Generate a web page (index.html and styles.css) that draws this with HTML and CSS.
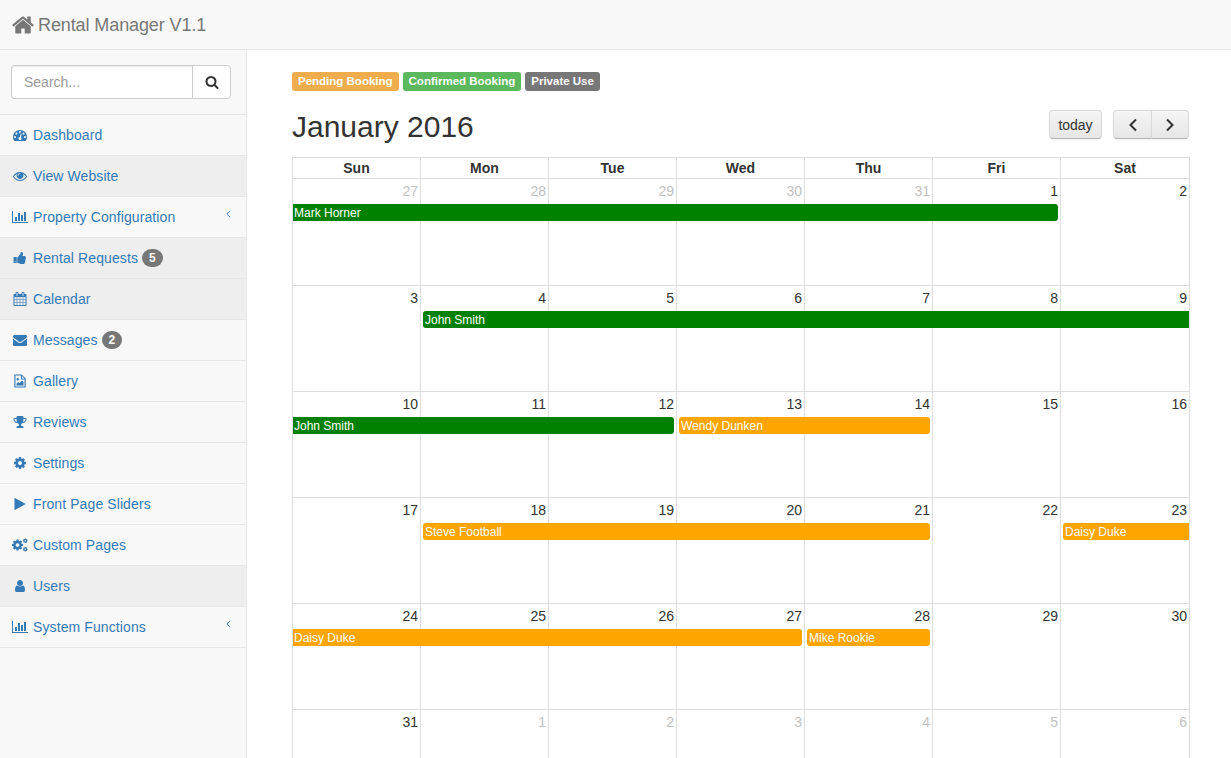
FILE: index.html
```html
<!DOCTYPE html>
<html lang="en">
<head>
    <meta charset="UTF-8">
    <meta name="viewport" content="width=device-width, initial-scale=1.0">
    <title>Rental Manager V1.1</title>
    <link rel="stylesheet" href="styles.css">
</head>
<body>
    <!-- icon sprite -->
    <svg class="sprite" xmlns="http://www.w3.org/2000/svg">
        <symbol id="i-home" viewBox="0 0 1792 1792"><path d="M1472 992v480q0 26-19 45t-45 19h-384v-384h-256v384h-384q-26 0-45-19t-19-45v-480q0-1 .5-3t.5-3l575-474 575 474q1 2 1 6zm223-69l-62 74q-8 9-21 11h-3q-13 0-21-7l-692-577-692 577q-12 8-24 7-13-2-21-11l-62-74q-8-10-7-23.5t11-21.5l719-599q32-26 76-26t76 26l244 204v-195q0-14 9-23t23-9h192q14 0 23 9t9 23v408l219 182q10 8 11 21.5t-7 23.5z"/></symbol>
        <symbol id="i-search" viewBox="0 0 1792 1792"><path d="M1216 832q0-185-131.500-316.500t-316.500-131.500-316.500 131.500-131.500 316.500 131.500 316.500 316.500 131.500 316.500-131.500 131.500-316.500zm512 832q0 52-38 90t-90 38q-54 0-90-38l-343-342q-179 124-399 124-143 0-273.500-55.500t-225-150-150-225-55.500-273.500 55.500-273.500 150-225 225-150 273.500-55.500 273.500 55.500 225 150 150 225 55.500 273.500q0 220-124 399l343 343q37 37 37 90z"/></symbol>
        <symbol id="i-dashboard" viewBox="0 0 1792 1792"><path d="M384 1152q0-53-37.500-90.500t-90.500-37.500-90.500 37.500-37.500 90.500 37.500 90.500 90.500 37.500 90.500-37.500 37.500-90.500zm192-448q0-53-37.500-90.500t-90.500-37.500-90.500 37.500-37.500 90.500 37.500 90.500 90.500 37.500 90.500-37.500 37.500-90.500zm428 481l101-382q6-26-7.500-48.500t-38.500-29.500-48 6.500-30 39.500l-101 382q-60 5-107 43.500t-63 98.500q-20 77 20 146t117 90 146-20 90-117q16-60-6-117t-72-91zm660-33q0-53-37.500-90.500t-90.500-37.500-90.500 37.500-37.500 90.500 37.500 90.500 90.500 37.500 90.500-37.500 37.500-90.500zm-640-640q0-53-37.500-90.500t-90.500-37.500-90.500 37.500-37.500 90.500 37.500 90.500 90.500 37.500 90.500-37.500 37.500-90.500zm448 192q0-53-37.500-90.500t-90.500-37.500-90.500 37.500-37.500 90.500 37.500 90.500 90.500 37.500 90.500-37.500 37.500-90.500zm320 448q0 261-141 483-19 29-54 29h-1402q-35 0-54-29-141-221-141-483 0-182 71-348t191-286 286-191 348-71 348 71 286 191 191 286 71 348z"/></symbol>
        <symbol id="i-eye" viewBox="0 0 1792 1792"><path d="M1664 960q-152-236-381-353 61 104 61 225 0 185-131.500 316.500t-316.500 131.500-316.500-131.500-131.500-316.500q0-121 61-225-229 117-381 353 133 205 333.500 326.500t434.500 121.500 434.500-121.500 333.500-326.500zm-720-384q0-20-14-34t-34-14q-125 0-214.500 89.500t-89.500 214.500q0 20 14 34t34 14 34-14 14-34q0-86 61-147t147-61q20 0 34-14t14-34zm848 384q0 34-20 69-140 230-376.500 368.500t-499.500 138.500-499.500-139-376.500-368q-20-35-20-69t20-69q140-229 376.500-368t499.500-139 499.500 139 376.500 368q20 35 20 69z"/></symbol>
        <symbol id="i-chart" viewBox="0 0 2048 1792"><path d="M640 896v512h-256v-512h256zm384-512v1024h-256v-1024h256zm1024 1152v128h-2048v-1536h128v1408h1920zm-640-896v768h-256v-768h256zm384-384v1152h-256v-1152h256z"/></symbol>
        <symbol id="i-thumb" viewBox="0 0 1792 1792"><path d="M320 1344q0-26-19-45t-45-19q-27 0-45.500 19t-18.500 45q0 27 18.500 45.500t45.500 18.500q26 0 45-18.500t19-45.500zm160-512v640q0 26-19 45t-45 19h-288q-26 0-45-19t-19-45v-640q0-26 19-45t45-19h288q26 0 45 19t19 45zm1184 0q0 86-55 149 15 44 15 76 3 76-43 137 17 56 0 117-15 57-54 94 9 112-49 181-64 76-197 78h-129q-66 0-144-15.500t-121.500-29-120.500-39.500q-123-43-158-44-26-1-45-19.500t-19-44.500v-641q0-25 18-43.500t43-20.500q24-2 76-59t101-121q68-87 101-120 18-18 31-48t17.500-48.500 13.500-60.500q7-39 12.500-61t19.500-52 34-50q19-19 45-19 46 0 82.500 10.500t60 26 40 40.500 24 45 12 50 5 45 .5 39q0 38-9.500 76t-19 60-27.500 56q-3 6-10 18t-11 22-8 24h277q78 0 135 57t57 135z"/></symbol>
        <symbol id="i-calendar" viewBox="0 0 1792 1792"><path d="M192 1664h288v-288h-288v288zm352 0h320v-288h-320v288zm-352-352h288v-320h-288v320zm352 0h320v-320h-320v320zm-352-384h288v-288h-288v288zm736 736h320v-288h-320v288zm-384-736h320v-288h-320v288zm768 736h288v-288h-288v288zm-384-352h320v-320h-320v320zm-352-864v-288q0-13-9.500-22.500t-22.500-9.500h-64q-13 0-22.500 9.500t-9.500 22.500v288q0 13 9.500 22.500t22.500 9.500h64q13 0 22.500-9.500t9.500-22.500zm736 864h288v-320h-288v320zm-384-384h320v-288h-320v288zm384 0h288v-288h-288v288zm32-480v-288q0-13-9.500-22.500t-22.500-9.500h-64q-13 0-22.500 9.500t-9.500 22.500v288q0 13 9.500 22.500t22.500 9.500h64q13 0 22.500-9.500t9.500-22.500zm384-64v1280q0 52-38 90t-90 38h-1408q-52 0-90-38t-38-90v-1280q0-52 38-90t90-38h128v-96q0-66 47-113t113-47h64q66 0 113 47t47 113v96h384v-96q0-66 47-113t113-47h64q66 0 113 47t47 113v96h128q52 0 90 38t38 90z"/></symbol>
        <symbol id="i-envelope" viewBox="0 0 1792 1792"><path d="M1792 710v794q0 66-47 113t-113 47h-1472q-66 0-113-47t-47-113v-794q44 49 101 87 362 246 497 345 57 42 92.500 65.500t94.500 48 110 24.500h2q51 0 110-24.500t94.500-48 92.500-65.500q170-123 498-345 57-39 100-87zm0-294q0 79-49 151t-122 123q-376 261-468 325-10 7-42.500 30.500t-54 38-52 32.500-57.500 27-50 9h-2q-23 0-50-9t-57.500-27-52-32.500-54-38-42.500-30.500q-91-64-262-182.500t-205-142.500q-62-42-117-115.500t-55-136.500q0-78 41.500-130t118.500-52h1472q65 0 112.500 47t47.500 113z"/></symbol>
        <symbol id="i-file" viewBox="0 0 16 16"><path fill-rule="evenodd" d="M1.500 .5h8.500l4.500 4.500v10.500H1.500zM2.800 1.800v12.400h10.400V6.200H9V1.800zM10.200 2.200V5h2.800zM4 6a1.400 1.400 0 1 1 2.800 0a1.400 1.400 0 0 1-2.800 0zM4 13v-1.800l2-2 1.300 1.300 3-3.200 1.700 1.800v3.900z"/></symbol>
        <symbol id="i-trophy" viewBox="0 0 1792 1792"><path d="M522 883q-74-162-74-371h-256v96q0 78 94.500 162t235.500 113zm1078-275v-96h-256q0 209-74 371 141-29 235.500-113t94.500-162zm128-128v128q0 71-41.500 143t-112 130-173 97.500-215.500 44.500q-42 54-95 95-38 34-52.500 72.500t-14.500 89.500q0 54 30.500 91t97.500 37q75 0 133.500 45.500t58.500 114.500v64q0 14-9 23t-23 9h-832q-14 0-23-9t-9-23v-64q0-69 58.500-114.500t133.500-45.500q67 0 97.500-37t30.500-91q0-51-14.500-89.500t-52.500-72.500q-53-41-95-95-113-5-215.500-44.500t-173-97.500-112-130-41.500-143v-128q0-40 28-68t68-28h288v-96q0-66 47-113t113-47h576q66 0 113 47t47 113v96h288q40 0 68 28t28 68z"/></symbol>
        <symbol id="i-cog" viewBox="0 0 1792 1792"><path d="M1152 896q0-106-75-181t-181-75-181 75-75 181 75 181 181 75 181-75 75-181zm512-109v222q0 12-8 23t-20 13l-185 28q-19 54-39 91 35 50 107 138 10 12 10 25t-9 23q-27 37-99 108t-94 71q-12 0-26-9l-138-108q-44 23-91 38-16 136-29 186-7 28-36 28h-222q-14 0-24.500-8.500t-11.500-21.500l-28-184q-49-16-90-37l-141 107q-10 9-25 9-14 0-25-11-126-114-165-168-7-10-7-23 0-12 8-23 15-21 51-66.500t54-70.500q-27-50-41-99l-183-27q-13-2-21-12.500t-8-23.500v-222q0-12 8-23t19-13l186-28q14-46 39-92-40-57-107-138-10-12-10-24 0-10 9-23 26-36 98.500-107.500t94.500-71.500q13 0 26 10l138 107q44-23 91-38 16-136 29-186 7-28 36-28h222q14 0 24.500 8.500t11.500 21.500l28 184q49 16 90 37l142-107q9-9 24-9 13 0 25 10 129 119 165 170 7 8 7 22 0 12-8 23-15 21-51 66.500t-54 70.500q26 50 41 98l183 28q13 2 21 12.500t8 23.500z"/></symbol>
        <symbol id="i-cogs" viewBox="0 0 16 14">
            <use href="#i-cog" x="-1" y="0.500" width="13" height="13"/>
            <use href="#i-cog" x="10.500" y="0" width="5.500" height="5.500"/>
            <use href="#i-cog" x="10.500" y="8.500" width="5.500" height="5.500"/>
        </symbol>
        <symbol id="i-play" viewBox="0 0 1792 1792"><path d="M1576 927l-1328 738q-23 13-39.500 3t-16.500-36v-1472q0-26 16.500-36t39.500 3l1328 738q23 13 23 31t-23 31z"/></symbol>
        <symbol id="i-user" viewBox="0 0 1792 1792"><path d="M1536 1399q0 109-62.500 187t-150.500 78h-854q-88 0-150.500-78t-62.500-187q0-85 8.500-160.500t31.500-152 58.500-131 94-89 134.500-34.500q131 128 313 128t313-128q76 0 134.500 34.500t94 89 58.500 131 31.500 152 8.500 160.500zm-256-887q0 159-112.500 271.500t-271.500 112.500-271.500-112.500-112.500-271.500 112.500-271.500 271.500-112.500 271.500 112.500 112.500 271.500z"/></symbol>
    </svg>

    <div class="navbar">
        <a class="brand" href="#"><svg class="brand-icon"><use href="#i-home"/></svg>Rental Manager V1.1</a>
    </div>

    <div class="wrapper">
        <div class="sidebar">
            <div class="search-row">
                <div class="search-group">
                    <input class="search-input" type="text" placeholder="Search...">
                    <button class="search-btn" type="button"><svg class="search-icon"><use href="#i-search"/></svg></button>
                </div>
            </div>
            <ul class="side-nav">
                <li><a href="#"><span class="nav-icon"><svg><use href="#i-dashboard"/></svg></span>Dashboard</a></li>
                <li class="active"><a href="#"><span class="nav-icon"><svg><use href="#i-eye"/></svg></span>View Website</a></li>
                <li><a href="#"><span class="nav-icon"><svg class="wide"><use href="#i-chart"/></svg></span>Property Configuration<svg class="arrow" viewBox="0 0 6 10"><polyline points="5,1 1,5 5,9"/></svg></a></li>
                <li class="active"><a href="#"><span class="nav-icon"><svg><use href="#i-thumb"/></svg></span>Rental Requests <span class="badge">5</span></a></li>
                <li class="active"><a href="#"><span class="nav-icon"><svg><use href="#i-calendar"/></svg></span>Calendar</a></li>
                <li><a href="#"><span class="nav-icon"><svg><use href="#i-envelope"/></svg></span>Messages <span class="badge">2</span></a></li>
                <li><a href="#"><span class="nav-icon"><svg><use href="#i-file"/></svg></span>Gallery</a></li>
                <li><a href="#"><span class="nav-icon"><svg><use href="#i-trophy"/></svg></span>Reviews</a></li>
                <li><a href="#"><span class="nav-icon"><svg><use href="#i-cog"/></svg></span>Settings</a></li>
                <li><a href="#"><span class="nav-icon"><svg><use href="#i-play"/></svg></span>Front Page Sliders</a></li>
                <li><a href="#"><span class="nav-icon"><svg class="wide"><use href="#i-cogs"/></svg></span>Custom Pages</a></li>
                <li class="active"><a href="#"><span class="nav-icon"><svg><use href="#i-user"/></svg></span>Users</a></li>
                <li><a href="#"><span class="nav-icon"><svg class="wide"><use href="#i-chart"/></svg></span>System Functions<svg class="arrow" viewBox="0 0 6 10"><polyline points="5,1 1,5 5,9"/></svg></a></li>
            </ul>
        </div>

        <div class="main">
            <div class="legend">
                <span class="label label-warning">Pending Booking</span>
                <span class="label label-success">Confirmed Booking</span>
                <span class="label label-default">Private Use</span>
            </div>

            <div class="toolbar">
                <h2>January 2016</h2>
                <div class="toolbar-btns">
                    <button class="fc-btn fc-today" type="button">today</button>
                    <div class="btn-pair">
                        <button class="fc-btn fc-prev" type="button" aria-label="prev"><svg viewBox="0 0 10 14"><polyline points="8,1.500 2.500,7 8,12.500"/></svg></button>
                        <button class="fc-btn fc-next" type="button" aria-label="next"><svg viewBox="0 0 10 14"><polyline points="2,1.500 7.500,7 2,12.500"/></svg></button>
                    </div>
                </div>
            </div>

            <div class="calendar">
                <div class="day-head">
                    <div>Sun</div><div>Mon</div><div>Tue</div><div>Wed</div><div>Thu</div><div>Fri</div><div>Sat</div>
                </div>
                <div class="weeks">
                    <div class="week">
                        <div class="day other">27</div><div class="day other">28</div><div class="day other">29</div><div class="day other">30</div><div class="day other">31</div><div class="day">1</div><div class="day">2</div>
                        <div class="event green from-1 span-6 end">Mark Horner</div>
                    </div>
                    <div class="week">
                        <div class="day">3</div><div class="day">4</div><div class="day">5</div><div class="day">6</div><div class="day">7</div><div class="day">8</div><div class="day">9</div>
                        <div class="event green from-2 span-6 start">John Smith</div>
                    </div>
                    <div class="week">
                        <div class="day">10</div><div class="day">11</div><div class="day">12</div><div class="day">13</div><div class="day">14</div><div class="day">15</div><div class="day">16</div>
                        <div class="event green from-1 span-3 end">John Smith</div>
                        <div class="event orange from-4 span-2 start end">Wendy Dunken</div>
                    </div>
                    <div class="week">
                        <div class="day">17</div><div class="day">18</div><div class="day">19</div><div class="day">20</div><div class="day">21</div><div class="day">22</div><div class="day">23</div>
                        <div class="event orange from-2 span-4 start end">Steve Football</div>
                        <div class="event orange from-7 span-1 start">Daisy Duke</div>
                    </div>
                    <div class="week">
                        <div class="day">24</div><div class="day">25</div><div class="day">26</div><div class="day">27</div><div class="day">28</div><div class="day">29</div><div class="day">30</div>
                        <div class="event orange from-1 span-4 end">Daisy Duke</div>
                        <div class="event orange from-5 span-1 start end">Mike Rookie</div>
                    </div>
                    <div class="week">
                        <div class="day">31</div><div class="day other">1</div><div class="day other">2</div><div class="day other">3</div><div class="day other">4</div><div class="day other">5</div><div class="day other">6</div>
                    </div>
                </div>
            </div>
        </div>
    </div>
</body>
</html>
```

FILE: styles.css
```css
* { box-sizing: border-box; }
html, body { height: 100%; }
body { margin: 0; display: flex; flex-direction: column; overflow: hidden; font-family: "Liberation Sans", Arial, sans-serif; font-size: 14px; line-height: 20px; color: #333; background: #fff; }
a { text-decoration: none; }
.sprite { display: none; }

/* top bar */
.navbar { flex: none; height: 50px; background: #f8f8f8; border-bottom: 1px solid #e7e7e7; }
.brand { display: flex; align-items: center; height: 49px; padding-left: 11px; font-size: 18px; letter-spacing: -0.1px; color: #777; }
.brand-icon { width: 24px; height: 24px; margin-right: 3px; fill: #777; }

.wrapper { flex: 1; display: flex; min-height: 0; }

/* sidebar */
.sidebar { flex: none; width: 247px; background: #f8f8f8; border-right: 1px solid #e7e7e7; }
.search-row { padding: 15px 15px 15px 11px; border-bottom: 1px solid #e7e7e7; }
.search-group { display: flex; height: 34px; }
.search-input { flex: 1; min-width: 0; padding: 6px 12px; font: inherit; color: #555; background: #fff; border: 1px solid #ccc; border-right: 0; border-radius: 4px 0 0 4px; box-shadow: inset 0 1px 1px rgba(0,0,0,0.075); }
.search-input::placeholder { color: #999; }
.search-btn { display: flex; align-items: center; justify-content: center; width: 39px; padding: 0; background: #fff; border: 1px solid #ccc; border-radius: 0 4px 4px 0; }
.search-icon { width: 14px; height: 14px; fill: #333; }

.side-nav { margin: 0; padding: 0; list-style: none; }
.side-nav li { height: 41px; border-bottom: 1px solid #e7e7e7; }
.side-nav li.active { background: #eee; }
.side-nav a { display: flex; align-items: center; height: 40px; padding: 0 15px; letter-spacing: 0.1px; color: #337ab7; white-space: pre; }
.nav-icon { flex: none; display: flex; justify-content: center; width: 18px; margin-left: -4px; margin-right: 4px; }
.nav-icon svg { width: 14px; height: 14px; fill: #337ab7; color: #337ab7; }
.nav-icon svg.wide { width: 16px; }
.arrow { width: 5px; height: 8px; margin-left: auto; margin-top: -7px; fill: none; stroke: #337ab7; stroke-width: 1.200; }
.badge { display: inline-block; min-width: 10px; padding: 3px 7px; font-size: 12px; font-weight: bold; line-height: 1; color: #fff; background: #777; border-radius: 10px; }

/* main area */
.main { flex: 1; min-width: 0; padding: 22px 41px 0 45px; }
.legend { display: flex; gap: 4px; height: 19px; margin-bottom: 19px; }
.label { padding: 0 6px; font-size: 11.500px; font-weight: bold; line-height: 19px; color: #fff; border-radius: 3px; }
.label-warning { background: #f0ad4e; }
.label-success { background: #5cb85c; }
.label-default { background: #777; }

.toolbar { display: flex; justify-content: space-between; align-items: center; height: 29px; margin-bottom: 18px; }
.toolbar h2 { margin: 4px 0 0; font-size: 30px; font-weight: normal; line-height: 33px; }
.toolbar-btns { display: flex; gap: 11px; margin-right: 1px; }
.btn-pair { display: flex; }
.fc-btn { height: 29px; padding: 0; font: inherit; color: #333; background: linear-gradient(to bottom, #f5f5f5, #e6e6e6); border: 1px solid #d8d8d8; border-bottom-color: #b3b3b3; border-radius: 4px; box-shadow: inset 0 1px 0 rgba(255,255,255,0.2), 0 1px 2px rgba(0,0,0,0.05); }
.fc-today { width: 53px; }
.fc-prev, .fc-next { display: flex; align-items: center; justify-content: center; width: 38px; }
.fc-prev { border-radius: 4px 0 0 4px; border-right: 0; }
.fc-next { border-radius: 0 4px 4px 0; }
.fc-btn svg { width: 10px; height: 14px; fill: none; stroke: #333; stroke-width: 2; }

/* calendar */
.calendar { width: 898px; }
.day-head { display: grid; grid-template-columns: repeat(6, 128px) 1fr; height: 22px; border: 1px solid #ddd; border-right: 0; font-weight: bold; text-align: center; line-height: 20px; }
.day-head div { border-right: 1px solid #ddd; }
.week { display: grid; grid-template-columns: repeat(6, 128px) 1fr; grid-template-rows: 25px 17px 1fr; height: 106px; border-left: 1px solid #ddd; border-bottom: 1px solid #ddd; }
.week:first-child { height: 107px; }
.day { grid-row: 1 / -1; padding: 2px 2px 0 0; text-align: right; border-right: 1px solid #ddd; }
.day:nth-child(1) { grid-column: 1; }
.day:nth-child(2) { grid-column: 2; }
.day:nth-child(3) { grid-column: 3; }
.day:nth-child(4) { grid-column: 4; }
.day:nth-child(5) { grid-column: 5; }
.day:nth-child(6) { grid-column: 6; }
.day:nth-child(7) { grid-column: 7; }
.day.other { color: #c2c2c2; }

.event { grid-row: 2; margin-right: 1px; padding-left: 1px; font-size: 12px; line-height: 19px; color: #fff; white-space: nowrap; overflow: hidden; }
.event.start { margin-left: 2px; padding-left: 2px; border-top-left-radius: 3px; border-bottom-left-radius: 3px; }
.event.end { margin-right: 3px; border-top-right-radius: 3px; border-bottom-right-radius: 3px; }
.green { background: green; }
.orange { background: orange; }
.from-1 { grid-column-start: 1; }
.from-2 { grid-column-start: 2; }
.from-4 { grid-column-start: 4; }
.from-5 { grid-column-start: 5; }
.from-7 { grid-column-start: 7; }
.span-1 { grid-column-end: span 1; }
.span-2 { grid-column-end: span 2; }
.span-3 { grid-column-end: span 3; }
.span-4 { grid-column-end: span 4; }
.span-6 { grid-column-end: span 6; }
```
